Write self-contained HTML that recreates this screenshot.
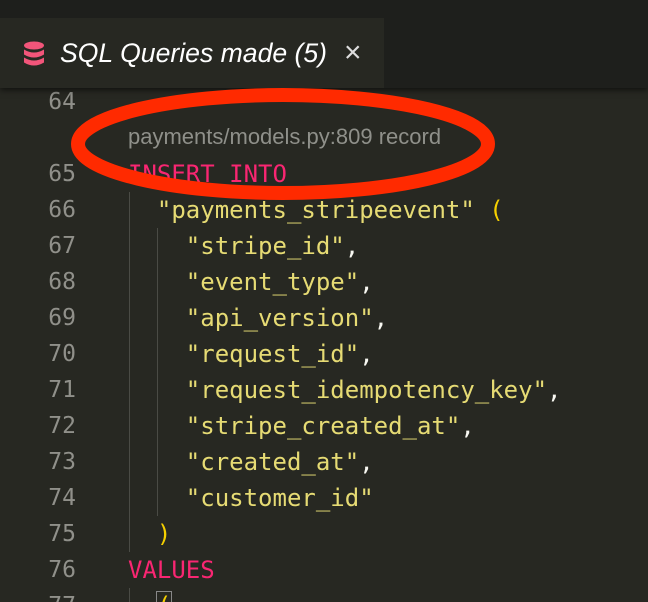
<!DOCTYPE html>
<html style="overflow:hidden;height:602px"><head><style>
body{margin:0;width:648px;height:602px;overflow:hidden;background:#272822;position:relative;font-family:"DejaVu Sans Mono","Liberation Mono",monospace}
#top{position:absolute;left:0;top:0;width:648px;height:88px;background:#1e1f1c;box-shadow:0 2px 6px rgba(0,0,0,.6);z-index:2}
#tab{position:absolute;left:0;top:18px;width:384px;height:70px;background:#272822}
#tab .t{position:absolute;left:60px;top:20px;font:italic 26.6px "Liberation Sans",sans-serif;color:#fff;white-space:nowrap}
#tab .x{position:absolute;left:344px;top:18px;color:#ddd;font:30px "Liberation Sans",sans-serif}
.ln{position:absolute;left:0;width:76px;text-align:right;color:#90908a;font-size:23px;line-height:36px}
.cd{position:absolute;left:128px;font-size:24px;line-height:36px;white-space:pre;color:#f8f8f2}
.k{color:#f92672}.s{color:#e6db74}.p{color:#f5d000}
.g{position:absolute;width:1px;background:#4a4b45}
</style></head><body>
<div id="top"><div id="tab">
<svg style="position:absolute;left:23px;top:23px" width="22" height="26" viewBox="0 0 22 26"><ellipse cx="11" cy="4.5" rx="10" ry="4" fill="#f2557a"/><path d="M1 8.5q10 6 20 0v5q-10 6-20 0z" fill="#f2557a"/><path d="M1 16.5q10 6 20 0v5q-10 6-20 0z" fill="#f2557a"/></svg>
<div class="t">SQL Queries made (5)</div><div class="x">×</div></div></div>
<div class="g" style="left:129px;top:192px;height:360px"></div>
<div class="g" style="left:157px;top:228px;height:288px"></div>
<div class="g" style="left:129px;top:588px;height:14px"></div>
<div class="ln" style="top:84px">64</div>
<div style="position:absolute;left:128px;top:124px;font:22px 'Liberation Sans',sans-serif;color:#8f908a">payments/models.py:809 record</div>
<div class="ln" style="top:156px">65</div><div class="cd k" style="top:156px">INSERT INTO</div>
<div class="ln" style="top:192px">66</div><div class="cd" style="top:192px">  <span class="s">"payments_stripeevent"</span> <span class="p">(</span></div>
<div class="ln" style="top:228px">67</div><div class="cd" style="top:228px">    <span class="s">"stripe_id"</span>,</div>
<div class="ln" style="top:264px">68</div><div class="cd" style="top:264px">    <span class="s">"event_type"</span>,</div>
<div class="ln" style="top:300px">69</div><div class="cd" style="top:300px">    <span class="s">"api_version"</span>,</div>
<div class="ln" style="top:336px">70</div><div class="cd" style="top:336px">    <span class="s">"request_id"</span>,</div>
<div class="ln" style="top:372px">71</div><div class="cd" style="top:372px">    <span class="s">"request_idempotency_key"</span>,</div>
<div class="ln" style="top:408px">72</div><div class="cd" style="top:408px">    <span class="s">"stripe_created_at"</span>,</div>
<div class="ln" style="top:444px">73</div><div class="cd" style="top:444px">    <span class="s">"created_at"</span>,</div>
<div class="ln" style="top:480px">74</div><div class="cd" style="top:480px">    <span class="s">"customer_id"</span></div>
<div class="ln" style="top:516px">75</div><div class="cd" style="top:516px">  <span class="p">)</span></div>
<div class="ln" style="top:552px">76</div><div class="cd k" style="top:552px">VALUES</div>
<div class="ln" style="top:588px">77</div><div class="cd" style="top:588px">  <span class="p" style="outline:1px solid #888">(</span></div>
<svg style="position:absolute;left:0;top:0;z-index:3" width="648" height="602"><ellipse cx="283" cy="144" rx="205" ry="49" fill="none" stroke="#ff2a00" stroke-width="14"/></svg>
</body></html>
